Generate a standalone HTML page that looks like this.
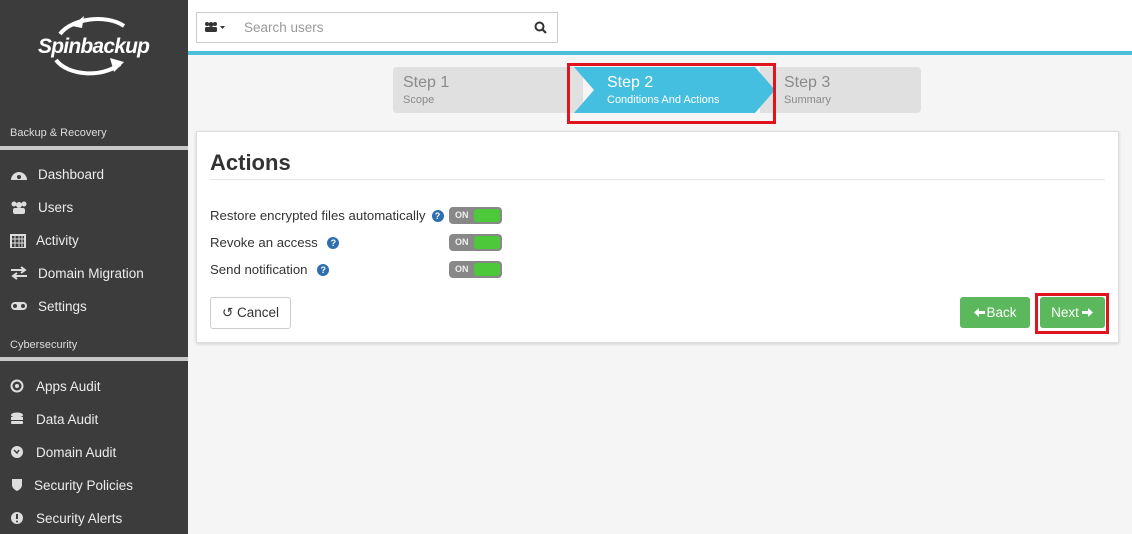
<!DOCTYPE html>
<html><head><style>
*{box-sizing:border-box;margin:0;padding:0}
body{width:1132px;height:534px;overflow:hidden;font-family:"Liberation Sans",Arial,sans-serif;background:#f5f5f5;position:relative}
#sb{position:absolute;left:0;top:0;width:188px;height:534px;background:#3c3c3c;color:#e6e6e6}
.sec{position:absolute;left:10px;font-size:11px;color:#ddd}
.bar{position:absolute;left:0;width:188px;height:4px;background:#c8c8c8}
.it{position:absolute;left:10px;font-size:13.5px;color:#ececec;display:flex;align-items:center;height:16px}
.it svg{margin-right:10px;flex:none}
#hdr{position:absolute;left:188px;top:0;width:944px;height:52px;background:#fff}
#cy{position:absolute;left:188px;top:51px;width:944px;height:4px;background:#4bbfd9}
#search{position:absolute;left:196px;top:12px;width:362px;height:31px;border:1px solid #ccc;background:#fff}
.step{position:absolute;top:67px;height:46px;background:#e0e0e0;color:#8a8a8a}
.panel{position:absolute;left:196px;top:131px;width:923px;height:212px;background:#fff;border:1px solid #ddd;box-shadow:0 1px 3px rgba(0,0,0,.15)}
.lbl{position:absolute;left:13px;font-size:13.2px;color:#333}
.q{display:inline-block;width:12px;height:12px;border-radius:50%;background:#2f6fb0;color:#fff;font-size:9px;font-weight:bold;text-align:center;line-height:12px;vertical-align:1px;margin-left:6px}
.tg{position:absolute;left:252px;width:53px;height:17px;border-radius:4px;background:#888;}
.tg b{position:absolute;left:6px;top:3px;font-size:9px;color:#eee}
.tg i{position:absolute;right:2px;top:2px;width:26px;height:13px;background:#4cc83a;border-radius:3px}
.btn{position:absolute;font-size:13.5px;border-radius:3px;text-align:center}
</style></head><body>
<div id="sb">
<svg style="position:absolute;left:32px;top:12px" width="125" height="66" viewBox="0 0 125 66">
<path d="M28 22 C40 6 75 2 92 14" stroke="#fff" stroke-width="4" fill="none"/>
<path d="M40 14 L52 4 L50 16Z" fill="#fff"/>
<path d="M24 48 C36 64 70 66 88 52" stroke="#fff" stroke-width="4" fill="none"/>
<path d="M78 46 L92 50 L82 60Z" fill="#fff"/>
<text x="62" y="41" text-anchor="middle" font-family="Liberation Sans" font-weight="bold" font-style="italic" font-size="21" fill="#fff" textLength="112">Spinbackup</text>
</svg>
<div class="sec" style="top:127px">Backup &amp; Recovery</div>
<div class="bar" style="top:146px"></div>
<div class="it" style="top:166px"><svg width="18" height="14"><path d="M1 13 A8 8 0 1 1 17 13Z" fill="#ddd"/><circle cx="9" cy="10" r="2" fill="#3c3c3c"/></svg>Dashboard</div>
<div class="it" style="top:199px"><svg width="18" height="14"><circle cx="4" cy="4" r="2.5" fill="#ddd"/><circle cx="14" cy="4" r="2.5" fill="#ddd"/><circle cx="9" cy="5" r="3" fill="#ddd"/><rect x="3" y="8" width="12" height="6" rx="2" fill="#ddd"/></svg>Users</div>
<div class="it" style="top:232px"><svg width="16" height="15"><rect x="1" y="2" width="14" height="13" fill="none" stroke="#ddd" stroke-width="2"/><path d="M1 6H15M1 10H15M5 2V15M9 2V15M12 2V15" stroke="#ddd"/></svg>Activity</div>
<div class="it" style="top:265px"><svg width="18" height="14"><path d="M1 4H15M11 1L15 4L11 7M17 10H3M7 7L3 10L7 13" stroke="#ddd" stroke-width="2" fill="none"/></svg>Domain Migration</div>
<div class="it" style="top:298px"><svg width="18" height="14"><rect x="1" y="3" width="16" height="8" rx="4" fill="#ddd"/><circle cx="5" cy="7" r="2" fill="#3c3c3c"/><circle cx="13" cy="7" r="2" fill="#3c3c3c"/></svg>Settings</div>
<div class="sec" style="top:339px">Cybersecurity</div>
<div class="bar" style="top:357px"></div>
<div class="it" style="top:378px"><svg width="16" height="14"><circle cx="7" cy="7" r="5.5" stroke="#ddd" stroke-width="2" fill="none"/><circle cx="7" cy="7" r="2" fill="#ddd"/></svg>Apps Audit</div>
<div class="it" style="top:411px"><svg width="16" height="15"><ellipse cx="7" cy="3" rx="6" ry="2.5" fill="#ddd"/><rect x="1" y="5" width="12" height="3" fill="#ddd"/><rect x="1" y="9" width="12" height="3" rx="1" fill="#ddd"/></svg>Data Audit</div>
<div class="it" style="top:444px"><svg width="16" height="14"><circle cx="7" cy="7" r="6" fill="#ddd"/><path d="M4 5L7 8L9 5" stroke="#3c3c3c" stroke-width="1.5" fill="none"/></svg>Domain Audit</div>
<div class="it" style="top:477px"><svg width="14" height="14"><path d="M2 1H12V7C12 11 7 13 7 13C7 13 2 11 2 7Z" fill="#ddd"/></svg>Security Policies</div>
<div class="it" style="top:510px"><svg width="16" height="14"><circle cx="7" cy="7" r="6" fill="#ddd"/><path d="M7 3V8" stroke="#3c3c3c" stroke-width="2"/><circle cx="7" cy="10.5" r="1" fill="#3c3c3c"/></svg>Security Alerts</div>
</div>
<div id="hdr"></div><div id="cy"></div>
<div id="search"><svg style="position:absolute;left:7px;top:8px" width="22" height="12"><circle cx="3" cy="3" r="2" fill="#333"/><circle cx="11" cy="3" r="2" fill="#333"/><circle cx="7" cy="3.5" r="2.5" fill="#333"/><rect x="1" y="6" width="12" height="5" rx="1.5" fill="#333"/><path d="M16 5H21L18.5 8Z" fill="#333"/></svg><span style="position:absolute;left:47px;top:7px;font-size:13.5px;color:#999">Search users</span>
<svg style="position:absolute;right:10px;top:8px" width="13" height="13" viewBox="0 0 13 13"><circle cx="5.5" cy="5.5" r="4" stroke="#333" stroke-width="2" fill="none"/><path d="M8.5 8.5L12 12" stroke="#333" stroke-width="2.2"/></svg></div>
<div class="step" style="left:393px;width:190px;border-radius:4px 0 0 4px"><div style="position:absolute;left:10px;top:7px;font-size:16px">Step 1</div><div style="position:absolute;left:10px;top:27px;font-size:11px">Scope</div></div>
<div class="step" style="left:760px;width:161px;border-radius:0 4px 4px 0"><div style="position:absolute;left:24px;top:7px;font-size:16px">Step 3</div><div style="position:absolute;left:24px;top:27px;font-size:11px">Summary</div></div>
<svg style="position:absolute;left:570px;top:67px" width="205" height="46"><polygon points="4,0 185,0 205,23 185,46 4,46 24,23" fill="#45bfdf"/></svg>
<div style="position:absolute;left:607px;top:74px;font-size:16px;color:#fff">Step 2</div>
<div style="position:absolute;left:607px;top:94px;font-size:11px;color:#fff">Conditions And Actions</div>
<div style="position:absolute;left:567px;top:63px;width:209px;height:61px;border:3px solid #e0141e"></div>
<div class="panel">
<div style="position:absolute;left:13px;top:18px;font-size:22px;font-weight:bold;color:#333">Actions</div>
<div style="position:absolute;left:13px;top:47px;width:895px;height:1px;background:#e6e6e6"></div>
<div class="lbl" style="top:76px">Restore encrypted files automatically<span class="q">?</span></div>
<div class="lbl" style="top:103px">Revoke an access <span class="q">?</span></div>
<div class="lbl" style="top:130px">Send notification <span class="q">?</span></div>
<div class="tg" style="top:75px"><b>ON</b><i></i></div>
<div class="tg" style="top:102px"><b>ON</b><i></i></div>
<div class="tg" style="top:129px"><b>ON</b><i></i></div>
<div class="btn" style="left:13px;top:165px;width:81px;height:32px;border:1px solid #ccc;color:#333;line-height:30px">↺ Cancel</div>
<div class="btn" style="left:763px;top:165px;width:70px;height:31px;background:#5cb85c;color:#fff;line-height:31px"><svg width="13" height="11" style="vertical-align:-1px"><path d="M1 5.5L6 1V4H12V7H6V10Z" fill="#fff"/></svg>Back</div>
<div class="btn" style="left:843px;top:165px;width:65px;height:31px;background:#5cb85c;color:#fff;line-height:31px">Next<svg width="13" height="11" style="vertical-align:-1px;margin-left:2px"><path d="M12 5.5L7 1V4H1V7H7V10Z" fill="#fff"/></svg></div>
</div>
<div style="position:absolute;left:1035px;top:293px;width:74px;height:41px;border:3px solid #e0141e"></div>
</body></html>
